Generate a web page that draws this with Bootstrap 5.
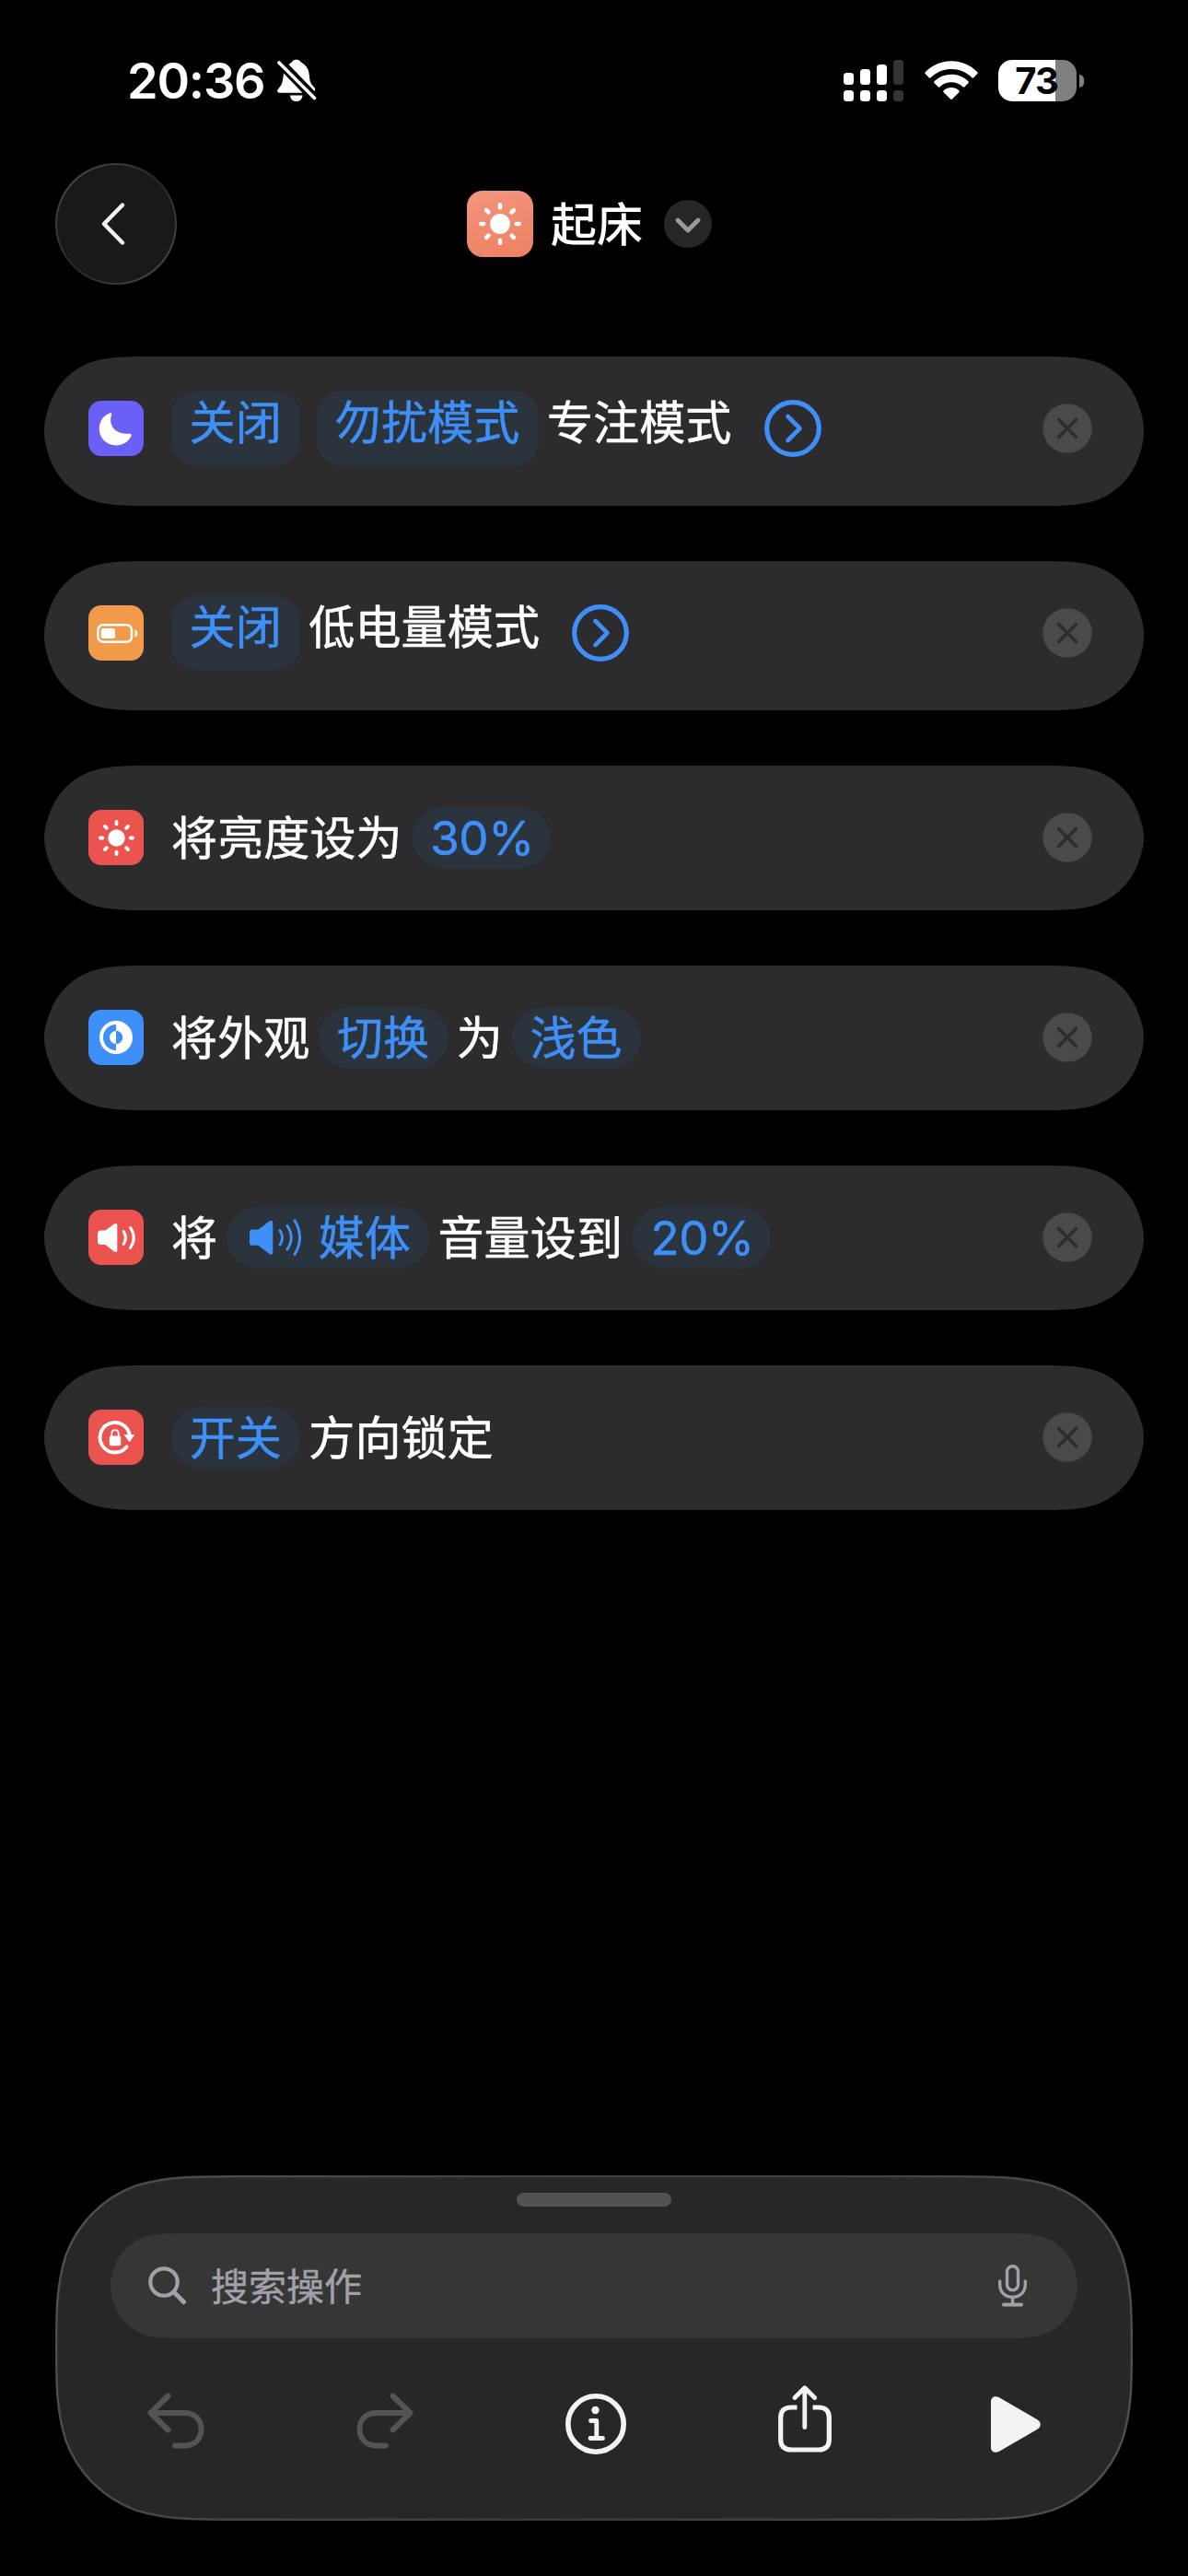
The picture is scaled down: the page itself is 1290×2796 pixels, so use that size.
<!DOCTYPE html>
<html lang="zh-CN" data-bs-theme="dark">
<head>
<meta charset="utf-8">
<meta name="viewport" content="width=device-width, initial-scale=1">
<title>起床</title>
<link href="https://cdn.jsdelivr.net/npm/bootstrap@5.3.0/dist/css/bootstrap.min.css" rel="stylesheet">
<style>
html,body{background:#000}
body{width:1290px;height:2796px;overflow:hidden;color:#fff;font-family:Inter,"Noto Sans CJK SC",sans-serif;line-height:1}
svg{display:block;flex:none}
.statusbar{height:177px;padding:0 113px 2px 138px}
.clock{font-size:54px;font-weight:600;letter-spacing:-1.2px}
.bell{margin-left:14px}
.wifi{margin:0 22px 0 23px}
.batt{width:85px;height:45px;padding-right:2px;border-radius:15px;background:linear-gradient(90deg,#fff 62px,#7f7f7f 62px);color:#000;font-weight:700;font-size:40px;letter-spacing:-1px}
.nub{width:5px;height:14px;border-radius:0 5px 5px 0;background:#7f7f7f;margin-left:3px}
.titlebar{padding:0 70px 0 60px;height:132px}
.side{width:132px;height:132px}
.back{border:2.5px solid transparent;background:linear-gradient(#191919,#191919) padding-box,linear-gradient(135deg,#484848 10%,#262626 50%,#484848 90%) border-box}
.back svg{margin-right:6px}
.appicon{width:72px;height:72px;border-radius:17px;background:linear-gradient(165deg,#f2957e,#ee8062)}
.apptitle{font-size:50px;font-weight:500;margin:2px 23px 0 19px}
.drop{width:52px;height:52px;background:#262628}
.drop svg{margin-top:3px}
.steps{padding:78px 48px 0;gap:60px}
.step{height:157px;padding:0 56.5px 1px 48px;background:#2c2c2e;font-size:50px;letter-spacing:.15px;-webkit-text-stroke:.55px currentColor;
 clip-path:path("M124 0H1070C1106 0 1123.7 0 1142.8 6.1C1163.8 13.7 1180.3 30.2 1187.9 51.2C1192 62 1194 70 1194 78.5C1194 87 1192 95 1187.9 105.8C1180.3 126.8 1163.8 143.3 1142.8 150.9C1123.7 157 1106 157 1070 157H124C88 157 70.3 157 51.2 150.9C30.2 143.3 13.7 126.8 6.1 105.8C2 95 0 87 0 78.5C0 70 2 62 6.1 51.2C13.7 30.2 30.2 13.7 51.2 6.1C70.3 0 88 0 124 0Z")}
.step-tall{height:162px;padding-bottom:6px;
 clip-path:path("M124 0H1070C1106 0 1123.7 0 1142.8 6.1C1163.8 13.7 1180.3 30.2 1187.9 51.2C1192 63 1194 71 1194 81C1194 91 1192 99 1187.9 110.8C1180.3 131.8 1163.8 148.3 1142.8 155.9C1123.7 162 1106 162 1070 162H124C88 162 70.3 162 51.2 155.9C30.2 148.3 13.7 131.8 6.1 110.8C2 99 0 91 0 81C0 71 2 63 6.1 51.2C13.7 30.2 30.2 13.7 51.2 6.1C70.3 0 88 0 124 0Z")}
.ico{width:60px;height:60px;border-radius:14px;margin-right:30px;flex:none}
.word{margin:0 10px 0 9px;padding-top:2px;white-space:nowrap}
.ico + .word{margin-left:0}
.pill{height:67px;padding:2px 20.500px 0 19.500px;border-radius:36px/33px;background:#2b333c;color:#3e8ff8;white-space:nowrap}
.pill + .pill{margin-left:18px}
.step-tall .pill{height:82px;border-radius:29px/27px;padding-top:0;padding-bottom:12px}
.step-tall .word{padding-top:0;padding-bottom:12px;margin-right:35px}
.pct{font-size:51px;letter-spacing:-.4px;padding:0 18.500px 0 19.500px;margin-left:1px}
.spk{margin:-2px 18px 0 5px}
.panel{width:1170px;height:375px;margin:auto 60px 60px}
.panel > *{grid-area:1/1}
.grab{width:168px;height:15px;border-radius:8px;background:#525252;margin-top:19px}
.search{width:1050px;height:114px;margin-top:29px;padding:0 55px 0 41px;background:#363636;color:#a1a1a9;font-size:41px;-webkit-text-stroke:.4px currentColor;
 clip-path:path("M87 0H963C988 0 1000.500 0 1014 4.300C1028.800 9.600 1040.400 21.200 1045.700 36C1048.700 44 1050 50 1050 57C1050 64 1048.700 70 1045.700 78C1040.400 92.800 1028.800 104.400 1014 109.700C1000.500 114 988 114 963 114H87C62 114 49.500 114 36 109.700C21.200 104.400 9.600 92.800 4.300 78C1.300 70 0 64 0 57C0 50 1.300 44 4.300 36C9.600 21.200 21.200 9.600 36 4.300C49.500 0 62 0 87 0Z")}
.search span{margin-left:26px;padding-top:2px}
.tools{width:970px;height:76px;margin-top:51px;gap:165px}
.t-undo,.t-redo{margin-top:8px}
.t-info{margin-top:9px}
.t-play{margin:12px 0 0 8px}
</style>
</head>
<body class="d-flex flex-column m-0">
<svg width="0" height="0" class="position-absolute">
 <symbol id="sun" viewBox="-23 -23 46 46"><circle r="10.900" fill="#fff"/><path stroke="#fff" stroke-width="4.500" stroke-linecap="round" d="M0-17.800V-20.700M0 17.800V20.700M-17.800 0H-20.700M17.800 0H20.700M12.600-12.600L14.800-14.800M-12.600-12.600L-14.800-14.800M12.600 12.600L14.800 14.800M-12.600 12.600L-14.800 14.800"/></symbol>
 <symbol id="del" viewBox="0 0 54 54"><circle cx="27" cy="27" r="26.700" fill="#4a4a4c"/><path d="M17.500 17.500L36.500 36.500M36.500 17.500L17.500 36.500" stroke="#2c2c2e" stroke-width="3.600" stroke-linecap="round"/></symbol>
 <symbol id="go" viewBox="0 0 62 62"><circle cx="31" cy="31" r="28.300" fill="none" stroke="#3e8ff8" stroke-width="5.200"/><path d="M25.500 18L38.500 31L25.500 44" fill="none" stroke="#3e8ff8" stroke-width="4.600" stroke-linecap="round" stroke-linejoin="round"/></symbol>
</svg>

<header>
 <div class="statusbar d-flex align-items-center">
  <span class="clock">20:36</span>
  <svg class="bell" width="43" height="47" viewBox="0 0 43 47"><g fill="#fff"><path d="M7 15.500C6 23 6 27 2 31.500C-1 34.500 0 36.700 2.500 36.700H27.500Z"/><path d="M12.500 6C14.500 4.500 15.500 4 16.500 2.500C18.500 0 23 0 25 2.500C26 4.200 28 4.500 30 6.500C37 13 33.500 21.500 37 27C39.500 30.500 42.500 31.500 40.500 35Z"/><path d="M14 39.500H27.500C27 44 24.500 46 20.700 46S14.500 44 14 39.500Z"/></g><path d="M2 4L40.500 42.500" stroke="#fff" stroke-width="3.600" stroke-linecap="round"/></svg>
  <svg class="ms-auto" width="65" height="45" viewBox="0 0 65 45" fill="#fff"><rect y="14" width="11" height="13" rx="3.500"/><rect x="18" y="10" width="11" height="17" rx="3.500"/><rect x="36" y="5" width="11" height="22" rx="3.500"/><rect x="54" width="11" height="27" rx="3.500" fill="#333"/><rect y="33" width="11" height="12" rx="3.500"/><rect x="18" y="33" width="11" height="12" rx="3.500"/><rect x="36" y="33" width="11" height="12" rx="3.500"/><rect x="54" y="33" width="11" height="12" rx="3.500" fill="#333"/></svg>
  <svg class="wifi" width="58" height="43" viewBox="0 0 58 43" fill="#fff"><path d="M0.700 12.200C16-3.700 42-3.700 57.300 12.200C57.900 12.800 57.900 13.500 57.300 14.100L53.300 18.200C52.700 18.800 52 18.800 51.400 18.200C39 6 19 6 6.600 18.200C6 18.800 5.300 18.800 4.700 18.200L.7 14.100C.1 13.500.1 12.800.7 12.200Z"/><path d="M10.600 22.300C20.500 12.200 37.500 12.200 47.400 22.300C48 22.900 48 23.600 47.400 24.200L43.400 28.200C42.800 28.800 42.100 28.800 41.500 28.200C34.500 21.500 23.500 21.500 16.500 28.200C15.900 28.800 15.200 28.800 14.600 28.200L10.600 24.200C10 23.600 10 22.900 10.600 22.300Z"/><path d="M20.700 32.300C25.500 27.900 32.500 27.900 37.300 32.300C37.900 32.900 37.900 33.600 37.300 34.200L30 41.500C29.400 42.100 28.600 42.100 28 41.500L20.700 34.200C20.100 33.600 20.100 32.900 20.700 32.300Z"/></svg>
  <div class="batt d-flex align-items-center justify-content-center">73</div><div class="nub"></div>
 </div>
 <div class="titlebar d-flex align-items-center justify-content-between">
  <div class="side back rounded-circle d-flex align-items-center justify-content-center"><svg width="26" height="46" viewBox="0 0 26 46"><path d="M23 2.500L3 23L23 43.500" fill="none" stroke="#f2f2f2" stroke-width="4.400" stroke-linecap="round" stroke-linejoin="round"/></svg></div>
  <div class="d-flex align-items-center">
   <div class="appicon d-flex align-items-center justify-content-center"><svg width="46" height="46"><use href="#sun"/></svg></div>
   <span class="apptitle">起床</span>
   <div class="drop rounded-circle d-flex align-items-center justify-content-center"><svg width="28" height="17" viewBox="0 0 28 17"><path d="M3 3L14 14L25 3" fill="none" stroke="#98989f" stroke-width="4.800" stroke-linecap="round" stroke-linejoin="round"/></svg></div>
  </div>
  <div class="side"></div>
 </div>
</header>

<main class="steps d-flex flex-column">
 <div class="step step-tall d-flex align-items-center">
  <svg class="ico" viewBox="0 0 60 60" style="background:#6a5ff6"><path fill="#fff" d="M23.500 13.300C24.800 12.800 25.700 13.600 25.200 15C22 24 26 36.500 44.500 35.800C46.300 35.700 47.200 36.600 46.500 38C44 44.500 37 48.400 30 48.400C19.500 48.400 11.800 40.500 11.800 30.500C11.800 22.500 16 16 23.500 13.300Z"/></svg>
  <span class="pill d-flex align-items-center">关闭</span><span class="pill d-flex align-items-center">勿扰模式</span><span class="word">专注模式</span>
  <svg width="62" height="62"><use href="#go"/></svg>
  <svg class="ms-auto" width="54" height="54"><use href="#del"/></svg>
 </div>
 <div class="step step-tall d-flex align-items-center">
  <svg class="ico" viewBox="0 0 60 60" style="background:#f09a4a"><rect x="10.400" y="21.200" width="36.600" height="18.600" rx="5.500" fill="none" stroke="#fff" stroke-width="2.500"/><rect x="13.700" y="25" width="15.300" height="11" rx="2" fill="#fff"/><path d="M50.400 26.200C54.600 28 54.600 33 50.400 34.800Z" fill="#fff"/></svg>
  <span class="pill d-flex align-items-center">关闭</span><span class="word">低电量模式</span>
  <svg width="62" height="62"><use href="#go"/></svg>
  <svg class="ms-auto" width="54" height="54"><use href="#del"/></svg>
 </div>
 <div class="step d-flex align-items-center">
  <div class="ico d-flex align-items-center justify-content-center" style="background:#eb544e"><svg width="39" height="39"><use href="#sun"/></svg></div>
  <span class="word">将亮度设为</span><span class="pill pct d-flex align-items-center">30%</span>
  <svg class="ms-auto" width="54" height="54"><use href="#del"/></svg>
 </div>
 <div class="step d-flex align-items-center">
  <svg class="ico" viewBox="0 0 60 60" style="background:#3e8ff8"><circle cx="30" cy="30" r="16" fill="none" stroke="#fff" stroke-width="4"/><path d="M30 13A17 17 0 0 1 30 47V37A7 7 0 0 0 30 23ZM30 23A7 7 0 0 0 30 37Z" fill="#fff"/><path d="M30 23A7 7 0 0 1 30 37Z" fill="#3e8ff8"/></svg>
  <span class="word">将外观</span><span class="pill d-flex align-items-center">切换</span><span class="word">为</span><span class="pill d-flex align-items-center">浅色</span>
  <svg class="ms-auto" width="54" height="54"><use href="#del"/></svg>
 </div>
 <div class="step d-flex align-items-center">
  <svg class="ico" viewBox="0 0 60 60" style="background:#eb544e"><path fill="#fff" d="M13.500 22.500H18.500L28 15.500C29.500 14.400 31.300 15 31.300 17V44C31.300 46 29.500 46.600 28 45.500L18.500 38H13.500C11.500 38 10 36.500 10 34.500V26C10 24 11.500 22.500 13.500 22.500Z"/><path fill="none" stroke="#fff" stroke-width="3" stroke-linecap="round" d="M38.200 23.500Q42.500 30.500 38.200 37.500M45.500 19.500Q53 30.500 45.500 41.500"/></svg>
  <span class="word">将</span><span class="pill d-flex align-items-center"><svg class="spk" width="57" height="41" viewBox="0 0 57 41"><path fill="#3e8ff8" d="M3 11.500H9.500L21.500 2.500C23.500 1 25.300 2 25.300 4V36.500C25.300 38.500 23.500 39.500 21.500 38L9.500 28.700H3C1.200 28.700 0 27.500 0 25.700V14.500C0 12.700 1.200 11.500 3 11.500Z"/><path fill="none" stroke="#3e8ff8" stroke-width="3" stroke-linecap="round" d="M33 12.500Q38 20.200 33 28M41 7.500Q49.500 20.200 41 33M49 1.800Q60 20.200 49 38.500"/></svg>媒体</span><span class="word">音量设到</span><span class="pill pct d-flex align-items-center">20%</span>
  <svg class="ms-auto" width="54" height="54"><use href="#del"/></svg>
 </div>
 <div class="step d-flex align-items-center">
  <svg class="ico" viewBox="0 0 60 60" style="background:#eb544e"><path fill="none" stroke="#fff" stroke-width="3.800" stroke-linecap="round" d="M41.500 40.300A16.200 16.200 0 1 1 44.800 28"/><path fill="#fff" stroke="#fff" stroke-width="1" stroke-linejoin="round" d="M39.300 27.500H49.700L44.600 34.700Z"/><rect x="22.800" y="28.500" width="12.400" height="10.700" rx="1.600" fill="#fff"/><path d="M25.300 29V26C25.300 20.800 32.700 20.800 32.700 26V29" fill="none" stroke="#fff" stroke-width="1.800"/></svg>
  <span class="pill d-flex align-items-center">开关</span><span class="word">方向锁定</span>
  <svg class="ms-auto" width="54" height="54"><use href="#del"/></svg>
 </div>
</main>

<footer class="panel d-grid">
 <svg width="1170" height="375" viewBox="0 0 1170 375"><defs><linearGradient id="rim" x1="0" y1="0" x2="1170" y2="375" gradientUnits="userSpaceOnUse"><stop offset="0" stop-color="#505050"/><stop offset=".3" stop-color="#424242"/><stop offset=".5" stop-color="#3a3a3a"/><stop offset=".7" stop-color="#404040"/><stop offset="1" stop-color="#525252"/></linearGradient></defs><path transform="translate(1.200 1.200) scale(.998 .9936)" fill="#272727" stroke="url(#rim)" stroke-width="2.400" d="M209 0H961C1021 0 1051 0 1083.500 10.300C1119 23.200 1146.800 51 1159.700 86.500C1170 119 1170 149 1170 187.500C1170 226 1170 256 1159.700 288.500C1146.800 324 1119 351.800 1083.500 364.700C1051 375 1021 375 961 375H209C149 375 119 375 86.500 364.700C51 351.800 23.200 324 10.300 288.500C0 256 0 226 0 187.500C0 149 0 119 10.300 86.500C23.200 51 51 23.200 86.500 10.300C119 0 149 0 209 0Z"/></svg>
 <div class="d-flex flex-column align-items-center">
  <div class="grab"></div>
  <div class="search d-flex align-items-center">
   <svg width="42" height="42" viewBox="0 0 42 42" fill="none" stroke="#a1a1a9" stroke-linecap="round"><circle cx="17" cy="17" r="14.700" stroke-width="4.200"/><path d="M28 28L38.500 38.500" stroke-width="5"/></svg>
   <span>搜索操作</span>
   <svg class="ms-auto" width="31" height="46" viewBox="0 0 31 46" fill="none" stroke="#a1a1a9" stroke-width="3.400" stroke-linecap="round"><rect x="9.500" y="1.800" width="12" height="26" rx="6"/><path d="M1.700 18V21.500C1.700 30.500 8 35.300 15.500 35.300S29.300 30.500 29.300 21.500V18M15.500 35.500V43"/><path d="M6 43.500H25" stroke-width="4"/></svg>
  </div>
  <div class="tools d-flex align-items-start">
   <svg class="t-undo" width="62" height="62" viewBox="0 0 62 62" fill="none" stroke="#545454" stroke-width="6" stroke-linecap="round" stroke-linejoin="round"><path d="M22.500 3.500L3.500 22L22.500 40.500M4 22H40C52 22 58.500 29.500 58.500 39.500S52 57.500 40 57.500H30"/></svg>
   <svg class="t-redo" width="62" height="62" viewBox="0 0 62 62" fill="none" stroke="#545454" stroke-width="6" stroke-linecap="round" stroke-linejoin="round"><path d="M39.500 3.500L58.500 22L39.500 40.500M58 22H22C10 22 3.500 29.500 3.500 39.500S10 57.500 22 57.500H32"/></svg>
   <svg class="t-info" width="66" height="66" viewBox="0 0 66 66" fill="none" stroke="#f3f3f3" stroke-linecap="round" stroke-linejoin="round"><circle cx="33" cy="33" r="30.200" stroke-width="5.600"/><circle cx="32.500" cy="18" r="4.200" fill="#f3f3f3" stroke="none"/><path d="M27.500 29.500H33.800V48.500M27 48.500H40.500" stroke-width="4.800"/></svg>
   <svg width="58" height="74" viewBox="0 0 58 74" fill="none" stroke="#f3f3f3" stroke-width="5.200" stroke-linejoin="round"><path d="M20.500 24H14C6.500 24 2.700 28 2.700 35V59C2.700 66 6.500 70 14 70H44C51.500 70 55.300 66 55.300 59V35C55.300 28 51.500 24 44 24H37.500"/><path d="M28.800 3V45.500M18 13.500L28.800 2.800L39.600 13.500" stroke-width="4.800" stroke-linecap="round"/></svg>
   <svg class="t-play" width="54" height="61" viewBox="0 0 54 61"><path fill="#f3f3f3" d="M0 5.500C0 .8 4.500-1.200 9 1.300L50 25C55 28 55 33 50 36L9 59.700C4.500 62.200 0 60.200 0 55.500Z"/></svg>
  </div>
 </div>
</footer>
<script src="https://cdn.jsdelivr.net/npm/bootstrap@5.3.0/dist/js/bootstrap.bundle.min.js"></script>
</body>
</html>
